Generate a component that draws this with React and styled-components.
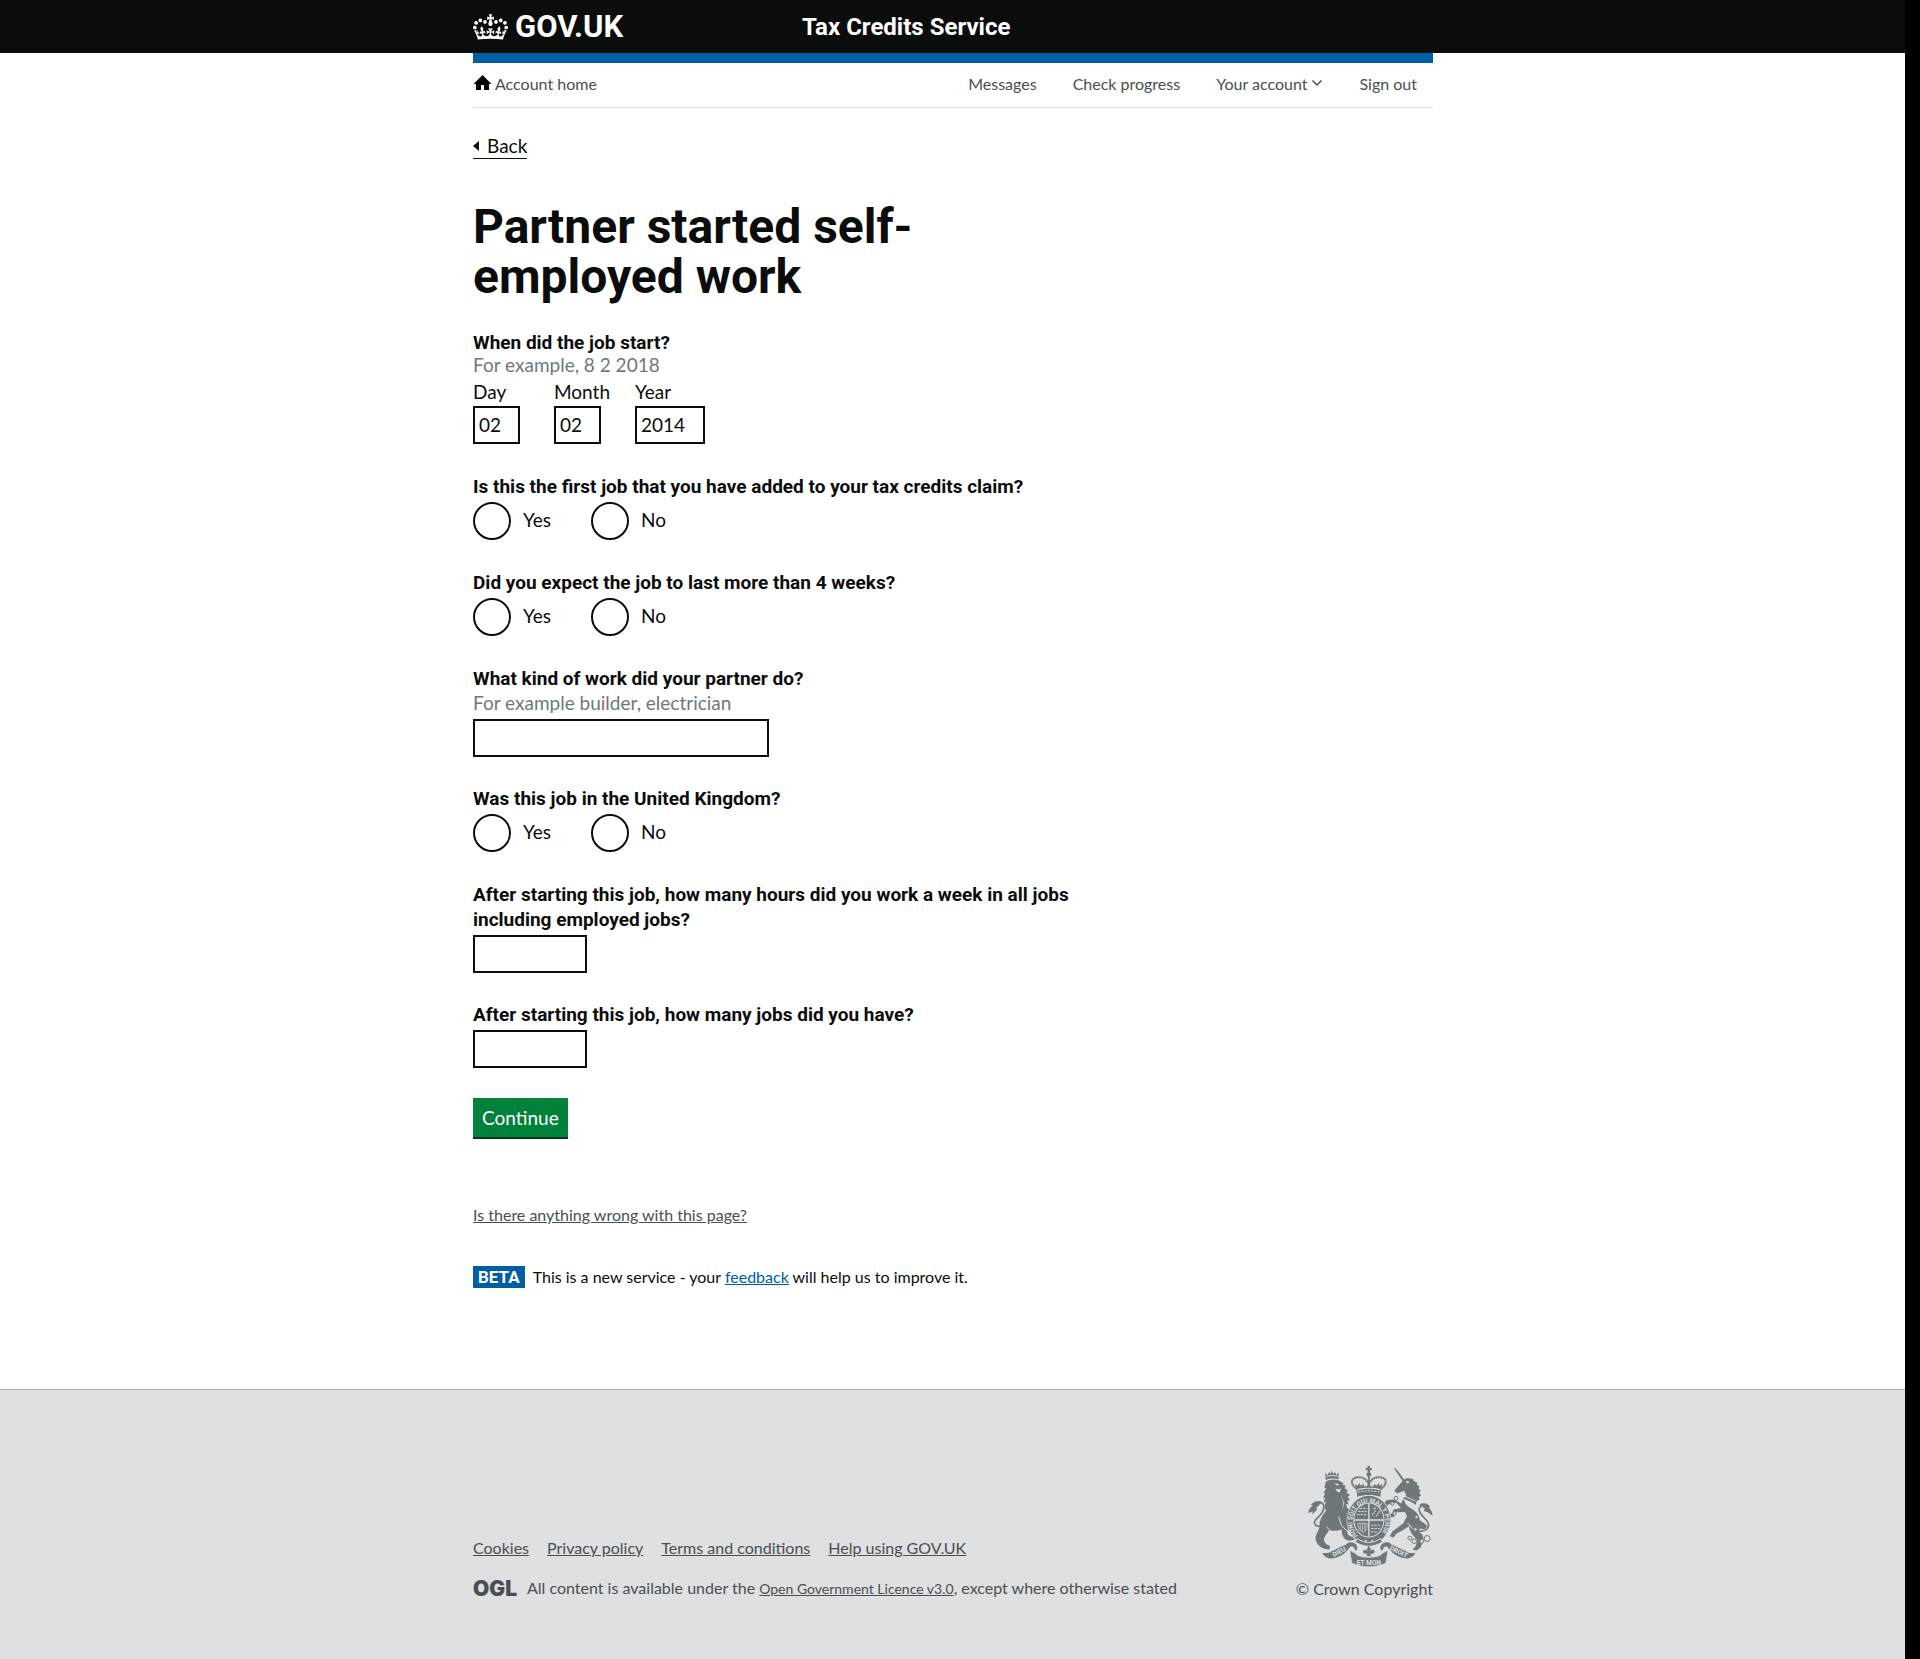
import React from 'react';
import styled, { createGlobalStyle } from 'styled-components';

const ink = '#0b0c0c';
const grey = '#4b4e50';
const muted = '#6f777b';
const blue = '#005ea5';
const panel = '#dee0e2';
const textFont = 'Lato, "Liberation Sans", sans-serif';
const boldFont = 'Roboto, "Liberation Sans", sans-serif';

const GlobalStyle = createGlobalStyle`
  * { box-sizing: border-box; }
  body {
    margin: 0;
    background: #000;
    font-family: ${textFont};
    color: ${ink};
  }
`;

const Page = styled.div`
  display: flex;
  flex-direction: column;
  min-height: 100vh;
  margin-right: 15px;
  background: #fff;
`;

const Container = styled.div`
  width: 100%;
  max-width: 961px;
  margin: 0 auto;
  padding-left: 1px;
`;

/* Header */

const Header = styled.header`
  background: ${ink};
`;

const HeaderInner = styled(Container)`
  display: grid;
  grid-template-columns: 329px 1fr;
  align-items: center;
  height: 53px;
`;

const HeaderLink = styled.a`
  display: flex;
  align-items: center;
  gap: 7px;
  font: 700 ${(p) => (p.$logo ? 31 : 24)}px/30px ${boldFont};
  color: #fff;
  text-decoration: none;
`;

const CrownSvg = styled.svg`
  width: 35px;
  height: 26px;
  fill: #fff;
`;

/* Account menu */

const AccountBar = styled.nav`
  display: flex;
  justify-content: space-between;
  align-items: center;
  height: 55px;
  padding: 0 16px 2px 0;
  border-top: 10px solid ${blue};
  border-bottom: 1px solid ${panel};
`;

const MenuGroup = styled.div`
  display: flex;
  gap: 36px;
`;

const MenuLink = styled.a`
  display: flex;
  align-items: center;
  gap: 4px;
  font-size: 16px;
  line-height: 20px;
  color: ${grey};
  text-decoration: none;
`;

/* Main column */

const Main = styled.main`
  display: flex;
  flex-direction: column;
  align-items: flex-start;
  max-width: 610px;
`;

const BackLink = styled.a`
  display: flex;
  align-items: center;
  gap: 8px;
  margin-top: 26px;
  padding-bottom: 1px;
  border-bottom: 1px solid ${ink};
  font-size: 19px;
  line-height: 23px;
  color: ${ink};
  text-decoration: none;
`;

const Title = styled.h1`
  margin: 43px 0 29px;
  font: 700 48px/50px ${boldFont};
`;

const Form = styled.form`
  display: flex;
  flex-direction: column;
  align-items: flex-start;
`;

const Fieldset = styled.fieldset`
  min-width: 0;
  margin: 0 0 30px;
  padding: 0;
  border: 0;
`;

const Legend = styled.legend`
  padding: 0;
  font: 700 19px/${(p) => (p.$tight ? 23 : 25)}px ${boldFont};
`;

const Hint = styled.p`
  margin: 0;
  padding-bottom: 2px;
  font-size: 19px;
  line-height: ${(p) => (p.$tight ? 21 : 23)}px;
  color: ${muted};
`;

const DateParts = styled.div`
  display: flex;
  gap: 10px;
  margin-top: 3px;
`;

const DatePart = styled.label`
  display: flex;
  flex-direction: column;
  align-items: flex-start;
  gap: 2px;
  min-width: 71px;
  font-size: 19px;
  line-height: 24px;
`;

const Field = styled.div`
  margin-bottom: ${(p) => (p.$last ? 30 : 29)}px;
`;

const FieldLabel = styled.label`
  display: block;
  font: 700 19px/25px ${boldFont};
`;

const TextInput = styled.input`
  display: block;
  width: ${(p) => p.$width}px;
  height: 38px;
  padding: 0 4px 2px;
  border: 2px solid ${ink};
  border-radius: 0;
  background: #fff;
  font: 19px/24px ${textFont};
  color: ${ink};
`;

const FieldInput = styled(TextInput)`
  margin-top: 3px;
`;

const Choices = styled.div`
  display: flex;
  margin-top: 3px;
`;

const Choice = styled.label`
  display: flex;
  align-items: flex-start;
  gap: 12px;
  min-width: 118px;
  font-size: 19px;
  line-height: 35px;
`;

const Radio = styled.input`
  appearance: none;
  width: 38px;
  height: 38px;
  margin: 0;
  border: 2px solid ${ink};
  border-radius: 50%;
  background: #fff;

  &:checked {
    background: radial-gradient(${ink} 0 9px, #fff 10px);
  }
`;

const SubmitButton = styled.button`
  height: 39px;
  padding: 0 9px;
  border: 0;
  background: #00823b;
  box-shadow: 0 2px 0 #003618;
  font: 19px/25px ${textFont};
  color: #fff;
`;

const ReportLink = styled.a`
  margin-top: 68px;
  font-size: 16px;
  line-height: 20px;
  color: ${grey};
`;

const PhaseBanner = styled.div`
  display: flex;
  align-items: center;
  gap: 8px;
  margin: 41px 0 101px;
  font-size: 16px;
  line-height: 22px;

  a { color: ${blue}; }
`;

const PhaseTag = styled.strong`
  padding: 0 5px;
  background: ${blue};
  font: 700 17px/22px ${boldFont};
  color: #fff;
`;

/* Footer */

const Footer = styled.footer`
  flex: 1;
  border-top: 1px solid #a1acb2;
  background: ${panel};
`;

const FooterInner = styled(Container)`
  display: flex;
  justify-content: space-between;
  align-items: flex-end;
  padding-top: 75px;
  padding-bottom: 60px;
  font-size: 16px;
  line-height: 20px;
  color: ${grey};

  a { color: ${grey}; }
`;

const FooterLinks = styled.ul`
  display: flex;
  gap: 18px;
  margin: 0 0 20px;
  padding: 0;
  list-style: none;
`;

const Licence = styled.p`
  display: flex;
  align-items: center;
  gap: 10px;
  margin: 0;

  small { font-size: 14px; }
`;

const OglMark = styled.span`
  font: 900 21px/20px Inter, sans-serif;
`;

const Crest = styled.a`
  display: flex;
  flex-direction: column;
  align-items: flex-end;
  gap: 12px;
  && { text-decoration: none; }
`;

const CrestSvg = styled.svg`
  width: 125px;
  height: 102px;
`;

function Crown() {
  return (
    <CrownSvg viewBox="0 0 132 97" aria-hidden="true">
      <path d="M25 30.2c3.5 1.5 7.7-.2 9.1-3.7 1.5-3.6-.2-7.8-3.9-9.2-3.6-1.4-7.6.3-9.1 3.9-1.4 3.5.3 7.5 3.9 9zM9 39.5c3.6 1.5 7.8-.2 9.2-3.7 1.5-3.6-.2-7.8-3.9-9.1-3.6-1.5-7.6.2-9.1 3.8-1.4 3.5.3 7.5 3.8 9zM4.4 57.2c3.5 1.5 7.7-.2 9.1-3.8 1.5-3.6-.2-7.7-3.9-9.1-3.5-1.5-7.6.3-9.1 3.8-1.4 3.5.3 7.6 3.9 9.1zm38.3-21.4c3.5 1.5 7.7-.2 9.1-3.8 1.5-3.6-.2-7.7-3.9-9.1-3.6-1.5-7.6.3-9.1 3.8-1.3 3.6.4 7.7 3.9 9.1zm64.4-5.6c-3.6 1.5-7.8-.2-9.1-3.7-1.5-3.6.2-7.8 3.8-9.2 3.6-1.4 7.7.3 9.2 3.9 1.3 3.5-.4 7.5-3.9 9zm15.9 9.3c-3.6 1.5-7.7-.2-9.1-3.7-1.5-3.6.2-7.8 3.7-9.1 3.6-1.5 7.7.2 9.2 3.8 1.5 3.5-.3 7.5-3.8 9zm4.7 17.7c-3.6 1.5-7.8-.2-9.2-3.8-1.5-3.6.2-7.7 3.9-9.1 3.6-1.5 7.7.3 9.2 3.8 1.3 3.5-.4 7.6-3.9 9.1zM89.3 35.8c-3.6 1.5-7.8-.2-9.2-3.8-1.4-3.6.2-7.7 3.9-9.1 3.6-1.5 7.7.3 9.2 3.8 1.4 3.6-.3 7.7-3.9 9.1zM69.7 17.7l8.9 4.7V9.3l-8.9 2.8c-.2-.3-.5-.6-.9-.9L72.4 0H59.6l3.5 11.2c-.3.3-.6.5-.9.9l-8.8-2.8v13.1l8.8-4.7c.3.3.6.7.9.9l-5 15.4v.1c-.2.8-.4 1.6-.4 2.4 0 4.1 3.1 7.5 7 8.1h.2c.3 0 .7.1 1 .1.4 0 .7 0 1-.1h.2c4-.6 7.1-4.1 7.1-8.1 0-.8-.1-1.7-.4-2.4V34l-5.1-15.4c.4-.2.7-.6 1-.9zM66 92.8c16.9 0 32.8 1.1 47.1 3.2 4-16.9 8.9-26.7 14-33.5l-9.6-3.4c1 4.9 1.1 7.2 0 10.2-1.5-1.4-3-4.3-4.2-8.7L108.6 76c2.8-2 5-3.2 7.5-3.3-4.4 9.4-10 11.9-13.6 11.2-4.3-.8-6.3-4.6-5.6-7.9 1-4.7 5.7-5.9 8-.5 4.3-8.7-3-11.4-7.6-8.8 7.1-7.2 7.9-13.5 2.1-21.1-8 6.1-8.1 12.3-4.5 20.8-4.7-5.4-12.1-2.5-9.5 6.2 3.4-5.2 7.9-2 7.2 3.1-.6 4.3-6.4 7.8-13.5 7.2-10.3-.9-10.9-8-11.2-13.8 2.5-.5 7.1 1.8 11 7.3L80.2 60c-4.1 4.4-8 5.3-12.3 5.4 1.4-4.4 8-11.6 8-11.6H55.5s6.4 7.2 7.9 11.6c-4.2-.1-8-1-12.3-5.4l1.4 16.4c3.9-5.5 8.5-7.7 10.9-7.3-.3 5.8-.9 12.8-11.1 13.8-7.2.6-12.9-2.9-13.5-7.2-.7-5 3.8-8.3 7.1-3.1 2.7-8.7-4.6-11.6-9.4-6.2 3.7-8.5 3.6-14.7-4.6-20.8-5.8 7.6-5 13.9 2.2 21.1-4.7-2.6-11.9.1-7.7 8.8 2.3-5.5 7.1-4.2 8.1.5.7 3.3-1.3 7.1-5.7 7.9-3.5.7-9-1.8-13.5-11.2 2.5.1 4.7 1.3 7.5 3.3l-4.7-15.4c-1.2 4.4-2.7 7.2-4.3 8.7-1.1-3-.9-5.3 0-10.2l-9.5 3.4c5 6.9 9.9 16.7 14 33.5 14.8-2.1 30.8-3.2 47.7-3.2z" />
    </CrownSvg>
  );
}

function HouseIcon() {
  return (
    <svg width="18" height="20" viewBox="0 0 18 20" fill="#000" aria-hidden="true">
      <path d="M9.500 1L1 9.500V10h2v6h5v-5h3v5h5v-6h2v-.5z" />
    </svg>
  );
}

function Chevron() {
  return (
    <svg width="12" height="12" viewBox="0 0 12 12" fill="none" stroke={grey} strokeWidth="1.500" aria-hidden="true">
      <path d="M1.500 2.500L6 7l4.500-4.500" />
    </svg>
  );
}

function BackArrow() {
  return (
    <svg width="6" height="10" viewBox="0 0 6 10" fill={ink} aria-hidden="true">
      <path d="M6 0v10L0 5z" />
    </svg>
  );
}

function RoyalArms() {
  return (
    <CrestSvg viewBox="84 40 376 308" fill={muted} aria-hidden="true">
      {/* crown above the garter */}
      <path d="M263 42h8l-1 7 6-1v8l-6-1 1 8h-8l1-8-6 1v-8l6 1z" />
      <circle cx="267" cy="69" r="7" />
      <g fill="none" stroke={muted} strokeWidth="6" strokeDasharray="6 1">
        <path d="M232 114C210 98 211 80 232 77c18-2 30 8 35 22 5-14 17-24 35-22 21 3 22 21 0 37" />
        <path d="M267 76v28" />
      </g>
      <path d="M229 113l-3-16 8 6 4-9 5 9 8-6 3 8 7-1 6-10 6 10 7 1 3-8 8 6 5-9 4 9 8-6-3 16c-25-6-51-6-76 0z" />
      <path d="M230 117c25-7 49-7 74 0l-2 19c-23-7-47-7-70 0z" />
      <path d="M234 122c22-5 44-5 66 0" fill="none" stroke={panel} strokeWidth="3" strokeDasharray="6 4" />

      {/* lion */}
      <path d="M137 85l-2-21 8 7 3-10 6 6 3-11 4 11 6-6 4 9 7-7-1 21c-12-4-25-4-38 1z" />
      <path d="M139 75c11-4 23-4 34-1" fill="none" stroke={panel} strokeWidth="3" />
      <path d="M137 90c14-9 34-8 46 1l7 3-2 6 9 3-3 7 10 6-5 6 11 9-7 5 7 10-8 2 4 11-8-1 4 12 17 14c6 8 4 20-3 25l-12-7 6 17-8 20c0 12 7 18 20 18l2 9-18 3c-18-5-21-20-21-34-14 5-27 5-37 1l-14 20c-5 10-2 16 6 24l10 4-2 11-13-1c-19-6-30-20-29-37l12-29c-1-22 8-37 20-50l-5-9 4-18-7 2 5-14-6 1 6-14-5-2 8-12-5-3z" />
      <path d="M163 96l15 1-7 6zM166 111c6 3 11 3 17 0l-4 12-8-3zM181 128l9 24-4 24 7-22z" fill={panel} />
      <path d="M176 196l8 26 18 18M140 226c6 12 14 17 27 20" fill="none" stroke={panel} strokeWidth="3" />
      <path d="M120 226c-18-1-22-14-10-25 14-12 26-25 20-42-6-9-17-6-26-5" fill="none" stroke={muted} strokeWidth="5" />
      <path d="M122 149c-12 0-24 3-30 12l6 1c-8 6-13 13-14 24l13-6-1 9 14-13-1-8 11-10z" />

      {/* unicorn */}
      <path d="M342 48l8 4 27 36-6 4z" />
      <path d="M371 86l11-7 8 2 10 1 4 8 9 2-1 8 8 4-3 7 7 7-5 5 6 9-7 4 2 10-8 1-4 14-10-8-23-10c-2 11 6 20 16 26 18 9 29 22 30 38l14 10 10 9-11 8-13-2-4 9c14 9 18 17 12 31l-5 16-13 10-12-2 10-12 4-18c-13-14-24-26-24-42-14 10-25 17-38 22l-9 13-12-4 8-14 33-25 11-21-6-13-25 1-9 14-15 3-1-10 12-5 3-11 23-4-14-16-22 4-9 9-8-9 10-12 22-2 22 12c2-10 8-18 15-25l-6-13-22 8-8-8 5-7z" />
      <path d="M380 90l8 1-4 4zM366 130l42 19M362 141l40 17M384 215l24 26" fill={panel} stroke={panel} strokeWidth="3" />
      <path d="M412 240c26 2 40-8 34-25-8-17-29-26-27-42 2-11 14-13 23-6" fill="none" stroke={muted} strokeWidth="5" />
      <path d="M419 160c13-9 28-4 33 7l-4 3c7 4 11 12 11 23l-14-10-12-4 3-8z" />
      <g fill={panel} stroke={muted} strokeWidth="3">
        <circle cx="349" cy="141" r="6" />
        <circle cx="338" cy="157" r="5" />
        <circle cx="344" cy="186" r="5" />
        <circle cx="411" cy="197" r="5" />
        <circle cx="408" cy="234" r="5" />
        <circle cx="391" cy="261" r="6" />
        <circle cx="404" cy="270" r="7" />
        <circle cx="427" cy="270" r="6" />
        <circle cx="443" cy="262" r="9" />
      </g>

      {/* garter and shield */}
      <ellipse cx="267" cy="206" rx="67" ry="75" fill={panel} />
      <ellipse cx="267" cy="206" rx="65" ry="73" />
      <ellipse cx="267" cy="206" rx="47" ry="53" fill={panel} />
      <ellipse cx="267" cy="206" rx="44" ry="50" />
      <path d="M267 156v100M223 206h88" stroke={panel} strokeWidth="4" />
      <path d="M235 180h26M232 190h29M239 171h22M274 222h30M274 232h27M274 242h20" stroke={panel} strokeWidth="3" strokeDasharray="7 3" />
      <path d="M278 192c1-12 10-6 8-16M288 196c4-10 12-8 11-19M280 173l8-4" fill="none" stroke={panel} strokeWidth="3" />
      <path d="M234 216c1 18 9 24 18 28 8-6 10-16 9-28zM241 218v20M248 218v24M255 218v21" fill="none" stroke={panel} strokeWidth="2" />
      <path id="motto" d="M234 253A50 57 0 1 1 301 252" fill="none" />
      <text fontFamily="Roboto, sans-serif" fontWeight="700" fontSize="19" fill={panel}>
        <textPath href="#motto">HONI SOIT QUI MAL Y PENSE</textPath>
      </text>
      <path d="M232 262c22 16 48 16 70 0l6 10c-26 18-56 18-82 0z" stroke={panel} strokeWidth="3" />
      <circle cx="258" cy="269" r="3" fill={panel} />
      <circle cx="277" cy="269" r="3" fill={panel} />

      {/* ribbon */}
      <path d="M267 284l6 9-2 8c3-6 13-7 13 1 0 6-5 7-9 5l-3 4 4 7h-18l4-7-3-4c-4 2-9 1-9-5 0-8 10-7 13-1l-2-8z" />
      <path d="M126 306c31 1 55-10 80-32 20-3 31 10 24 24l-6-2c0-8-5-11-13-9-18 25-39 36-63 35-10-2-18-8-22-16zM408 306c-31 1-55-10-80-32-20-3-31 10-24 24l6-2c0-8 5-11 13-9 18 25 39 36 63 35 10-2 18-8 22-16z" />
      <path d="M150 303l46-22 6 12-44 26zM384 303l-46-22-6 12 44 26z" />
      <path d="M209 297c38 26 78 26 116 0l-7 40c-34 14-68 14-102 0z" stroke={panel} strokeWidth="2" />
      <path d="M226 305c28 15 54 15 82 0l-5 8c-24 9-48 9-72 0z" fill={panel} />
      <g fontFamily="Roboto, sans-serif" fontWeight="700" fontSize="20" fill={panel} textAnchor="middle">
        <text x="180" y="308" transform="rotate(-27 180 308)">DIEU</text>
        <text x="267" y="342">ET MON</text>
        <text x="354" y="308" transform="rotate(27 354 308)">DROIT</text>
      </g>
    </CrestSvg>
  );
}

function YesNo({ name, question }) {
  return (
    <Fieldset>
      <Legend>{question}</Legend>
      <Choices>
        {['Yes', 'No'].map((option) => (
          <Choice key={option}>
            <Radio type="radio" name={name} value={option} />
            {option}
          </Choice>
        ))}
      </Choices>
    </Fieldset>
  );
}

function TextField({ id, label, hint, width, last }) {
  return (
    <Field $last={last}>
      <FieldLabel htmlFor={id}>{label}</FieldLabel>
      {hint && <Hint id={`${id}-hint`}>{hint}</Hint>}
      <FieldInput id={id} type="text" $width={width} aria-describedby={hint ? `${id}-hint` : undefined} />
    </Field>
  );
}

const dateParts = [
  { label: 'Day', value: '02', width: 47 },
  { label: 'Month', value: '02', width: 47 },
  { label: 'Year', value: '2014', width: 70 },
];

const footerLinks = ['Cookies', 'Privacy policy', 'Terms and conditions', 'Help using GOV.UK'];

export default function App() {
  return (
    <>
      <GlobalStyle />
      <Page>
        <Header>
          <HeaderInner>
            <HeaderLink href="#" $logo><Crown />GOV.UK</HeaderLink>
            <HeaderLink href="#">Tax Credits Service</HeaderLink>
          </HeaderInner>
        </Header>
        <Container>
          <AccountBar aria-label="Account">
            <MenuLink href="#"><HouseIcon />Account home</MenuLink>
            <MenuGroup>
              <MenuLink href="#">Messages</MenuLink>
              <MenuLink href="#">Check progress</MenuLink>
              <MenuLink href="#">Your account<Chevron /></MenuLink>
              <MenuLink href="#">Sign out</MenuLink>
            </MenuGroup>
          </AccountBar>
          <Main>
            <BackLink href="#"><BackArrow />Back</BackLink>
            <Title>Partner started self-employed work</Title>
            <Form onSubmit={(event) => event.preventDefault()}>
              <Fieldset>
                <Legend $tight>When did the job start?</Legend>
                <Hint $tight>For example, 8 2 2018</Hint>
                <DateParts>
                  {dateParts.map((part) => (
                    <DatePart key={part.label}>
                      {part.label}
                      <TextInput type="text" inputMode="numeric" defaultValue={part.value} $width={part.width} />
                    </DatePart>
                  ))}
                </DateParts>
              </Fieldset>
              <YesNo name="first-job" question="Is this the first job that you have added to your tax credits claim?" />
              <YesNo name="four-weeks" question="Did you expect the job to last more than 4 weeks?" />
              <TextField id="work" label="What kind of work did your partner do?" hint="For example builder, electrician" width={296} />
              <YesNo name="in-uk" question="Was this job in the United Kingdom?" />
              <TextField id="hours" label="After starting this job, how many hours did you work a week in all jobs including employed jobs?" width={114} />
              <TextField id="jobs" label="After starting this job, how many jobs did you have?" width={114} last />
              <SubmitButton type="submit">Continue</SubmitButton>
            </Form>
            <ReportLink href="#">Is there anything wrong with this page?</ReportLink>
            <PhaseBanner>
              <PhaseTag>BETA</PhaseTag>
              <span>This is a new service - your <a href="#">feedback</a> will help us to improve it.</span>
            </PhaseBanner>
          </Main>
        </Container>
        <Footer>
          <FooterInner>
            <div>
              <FooterLinks>
                {footerLinks.map((text) => (
                  <li key={text}><a href="#">{text}</a></li>
                ))}
              </FooterLinks>
              <Licence>
                <OglMark>OGL</OglMark>
                <span>
                  All content is available under the <a href="#"><small>Open Government Licence v3.0</small></a>, except where otherwise stated
                </span>
              </Licence>
            </div>
            <Crest href="#"><RoyalArms />© Crown Copyright</Crest>
          </FooterInner>
        </Footer>
      </Page>
    </>
  );
}
